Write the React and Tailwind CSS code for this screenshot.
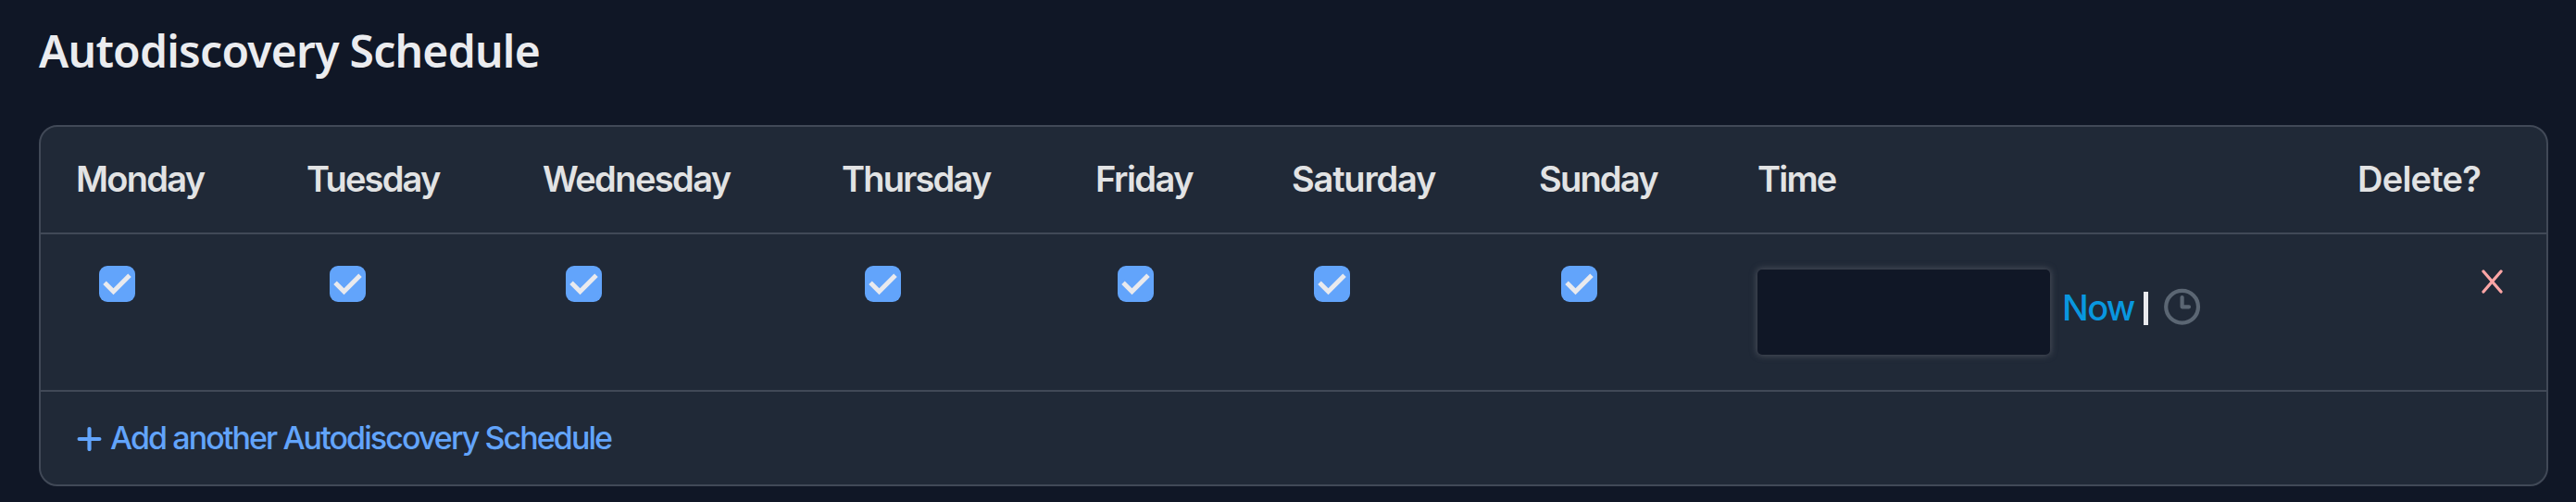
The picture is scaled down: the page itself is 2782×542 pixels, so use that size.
import React, { useState } from 'react';

const columns = [
  { name: 'Monday', heading: 'tracking-[-1.7px] -ml-px' },
  { name: 'Tuesday', heading: 'tracking-[-1.8px] -ml-px' },
  { name: 'Wednesday', heading: 'tracking-[-1.6px] -ml-px' },
  { name: 'Thursday', heading: 'tracking-[-1.8px] -ml-px' },
  { name: 'Friday', heading: 'tracking-[-1.5px]' },
  { name: 'Saturday', heading: 'tracking-[-1.2px]' },
  { name: 'Sunday', heading: 'tracking-[-1.8px]' },
];

const rowGrid = 'grid grid-cols-[249px_255px_323px_273px_212px_267px_236px_1fr_auto] pl-[39px]';

const DayCheckbox = ({ label, checked, onChange }) => (
  <button
    type="button"
    role="checkbox"
    aria-checked={checked}
    aria-label={label}
    onClick={onChange}
    className="ml-6 mt-[34px] block h-[39px] w-[39px] rounded-[9px] bg-[#62a4fb]"
  >
    {checked && (
      <svg viewBox="0 0 39 39" className="h-[39px] w-[39px]" fill="none" stroke="#e9eaee" strokeWidth="5">
        <path d="M6 18.3 L15.5 27.8 L33 10.3" />
      </svg>
    )}
  </button>
);

const App = () => {
  const [days, setDays] = useState(columns.map(() => true));
  const [time, setTime] = useState('');

  const toggle = (index) => setDays(days.map((d, i) => (i === index ? !d : d)));

  return (
    <div className="h-[542px] w-[2782px] overflow-hidden bg-[#101726] pl-[42px] pr-[30px] font-['Inter',sans-serif] text-[#e2e3e4]">
      <h2 className="flex h-[135px] items-start pt-[22px] font-['Noto_Sans',sans-serif] text-[48px] font-semibold leading-[66px] tracking-[-0.75px] text-[#ebecef]">
        Autodiscovery Schedule
      </h2>

      <div className="h-[390px] rounded-[20px] border-2 border-[#414957] bg-[#202937]">
        {/* Column headings */}
        <div className={`${rowGrid} h-[116px] border-b-2 border-[#414957] pt-[32px] text-[38px] font-semibold leading-[48px]`}>
          {columns.map((col) => (
            <div key={col.name}>
              <span className={col.heading}>{col.name}</span>
            </div>
          ))}
          <div className="tracking-[-1.8px]">Time</div>
          <div className="pr-[71px] tracking-[-0.8px]">Delete?</div>
        </div>

        {/* Schedule row */}
        <div className={`${rowGrid} h-[170px] border-b-2 border-[#414957]`}>
          {columns.map((col, i) => (
            <div key={col.name}>
              <DayCheckbox label={col.name} checked={days[i]} onChange={() => toggle(i)} />
            </div>
          ))}
          <div className="flex items-start pt-[38px]">
            <input
              aria-label="Time"
              value={time}
              onChange={(e) => setTime(e.target.value)}
              className="h-[92px] w-[316px] rounded-[5px] bg-[#101726] px-4 text-[36px] shadow-[0_0_7px_1px_#4b505b] outline-none"
            />
            <a href="#" className="ml-[13px] mt-[17px] w-[88px] text-[38px] font-medium leading-[48px] tracking-[-1.6px] text-[#0997df]">Now</a>
            <span className="mt-6 h-9 w-[5px] bg-[#e9eaee]"></span>
            <svg viewBox="0 0 40 40" className="ml-[17px] mt-[20px] h-10 w-10" fill="none" stroke="#5b6673" strokeWidth="4.2" strokeLinecap="round" strokeLinejoin="round">
              <circle cx="19.6" cy="20.2" r="17.4" />
              <path d="M19.6 10 V20.3 H27" />
            </svg>
          </div>
          <button type="button" aria-label="Delete" className="mr-[47px] mt-[38px] h-[26px] w-[23px] justify-self-end">
            <svg viewBox="0 0 23 26" className="h-[26px] w-[23px]" fill="none" stroke="#fca5a5" strokeWidth="3.3" strokeLinecap="round">
              <path d="M2 2 L21 24 M21 2 L2 24" />
            </svg>
          </button>
        </div>

        <a href="#" className="flex h-[100px] items-center pl-[39px] text-[#62a4fb]">
          <svg viewBox="0 0 27 27" className="h-[27px] w-[27px]" fill="none" stroke="currentColor" strokeWidth="4.2" strokeLinecap="round">
            <path d="M2.6 14 H24.4 M13.5 3 V25" />
          </svg>
          <span className="ml-[9px] text-[34px] font-medium leading-[44px] tracking-[-1.92px]">Add another Autodiscovery Schedule</span>
        </a>
      </div>
    </div>
  );
};

export default App;
